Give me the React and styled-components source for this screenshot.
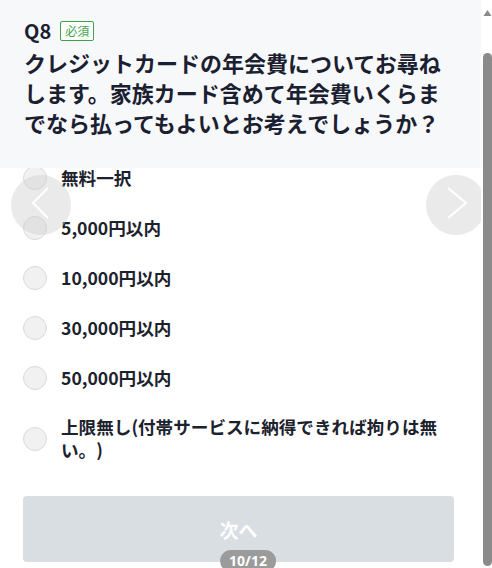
import React from "react";
import styled, { createGlobalStyle } from "styled-components";

const GlobalStyle = createGlobalStyle`
  html, body { margin: 0; padding: 0; background: #ffffff; }
  body { font-family: "Noto Sans CJK JP", "Noto Sans", sans-serif; overflow: hidden; text-spacing-trim: space-all; }
  * { box-sizing: border-box; }
`;

const Frame = styled.div`
  position: relative;
  display: flex;
  width: 492px;
  height: 568px;
  overflow: hidden;
  background: #ffffff;
`;

const Main = styled.main`
  position: relative;
  flex: 1;
  display: flex;
  flex-direction: column;
  overflow: hidden;
`;

const Header = styled.header`
  position: relative;
  z-index: 2;
  background: #f7f8fa;
  padding: 19px 24px 31px 24px;
  color: #1a2030;
`;

const QRow = styled.div`
  display: flex;
  align-items: center;
  gap: 9px;
  height: 24px;
`;

const QNum = styled.span`
  font-size: 20px;
  font-weight: 700;
  line-height: 24px;
`;

const Badge = styled.span`
  display: inline-flex;
  align-items: center;
  justify-content: center;
  height: 20px;
  padding: 0 4px;
  border: 1px solid #3fa34d;
  border-radius: 2px;
  color: #3fa34d;
  font-size: 12px;
  line-height: 1;
  background: #ffffff;
`;

const Title = styled.h1`
  margin: 4px 0 0 0;
  font-size: 22px;
  line-height: 30px;
  font-weight: 700;
`;

const Content = styled.div`
  display: flex;
  flex-direction: column;
  margin-top: -2px;
  padding: 0 27px 0 23px;
`;

const OptionList = styled.ul`
  list-style: none;
  margin: 0;
  padding: 0;
  display: flex;
  flex-direction: column;
  gap: 26px;
`;

const Option = styled.li`
  display: flex;
  align-items: center;
  gap: 14px;
  padding-right: 6px;
`;

const Radio = styled.span`
  flex: none;
  width: 24px;
  height: 24px;
  border-radius: 50%;
  background: #f1f1f1;
  border: 1px solid #dadada;
`;

const Label = styled.span`
  font-size: 17.6px;
  line-height: 23px;
  font-weight: 700;
  color: #1c222d;
  min-height: 24px;
  display: flex;
  align-items: center;
  position: relative;
  top: -1px;
`;

const NextButton = styled.button`
  margin-top: 34px;
  height: 66px;
  width: 100%;
  border: none;
  border-radius: 4px;
  background: #d9dee2;
  color: #ffffff;
  font-family: "Noto Sans CJK JP", "Noto Sans", sans-serif;
  font-size: 19px;
  font-weight: 700;
  padding: 0;
`;

const NavCircle = styled.div`
  position: absolute;
  top: 175px;
  left: ${(p) => p.$left}px;
  width: 60px;
  height: 60px;
  border-radius: 50%;
  background: rgba(205, 205, 205, 0.42);
  z-index: 3;
`;

const Progress = styled.div`
  position: absolute;
  left: 248px;
  bottom: -4px;
  transform: translateX(-50%);
  height: 22px;
  padding: 0 9px;
  border-radius: 11px;
  background: #9b9b9b;
  color: #ffffff;
  font-size: 14px;
  font-weight: 700;
  line-height: 22px;
  z-index: 4;
  font-family: "Noto Sans", "Noto Sans CJK JP", sans-serif;
`;

const ScrollTrack = styled.div`
  flex: none;
  width: 11px;
  display: flex;
  flex-direction: column;
  align-items: flex-end;
  background: #ffffff;
`;

const ArrowUp = styled.svg`
  margin-top: 8px;
  width: 9px;
  height: 9px;
`;

const Thumb = styled.div`
  margin-top: 36px;
  width: 9px;
  height: 513px;
  border-radius: 5px;
  background: #8b8b8b;
`;

const options = [
  "無料一択",
  "5,000円以内",
  "10,000円以内",
  "30,000円以内",
  "50,000円以内",
  "上限無し(付帯サービスに納得できれば拘りは無い。)",
];

export default function App() {
  return (
    <>
      <GlobalStyle />
      <Frame>
        <Main>
          <Header>
            <QRow>
              <QNum>Q8</QNum>
              <Badge>必須</Badge>
            </QRow>
            <Title>
              クレジットカードの年会費についてお尋ねします。家族カード含めて年会費いくらまでなら払ってもよいとお考えでしょうか？
            </Title>
          </Header>
          <Content>
            <OptionList>
              {options.map((o) => (
                <Option key={o}>
                  <Radio />
                  <Label>{o}</Label>
                </Option>
              ))}
            </OptionList>
            <NextButton type="button">次へ</NextButton>
          </Content>
          <NavCircle $left={11}>
            <svg width="60" height="60" viewBox="0 0 60 60">
              <polyline points="37,13 22,28 37,43" fill="none" stroke="#ffffff" strokeWidth="2" />
            </svg>
          </NavCircle>
          <NavCircle $left={426}>
            <svg width="60" height="60" viewBox="0 0 60 60">
              <polyline points="22,13 40,28 22,43" fill="none" stroke="#ffffff" strokeWidth="2" />
            </svg>
          </NavCircle>
        </Main>
        <ScrollTrack>
          <ArrowUp viewBox="0 0 9 9">
            <polygon points="0.5,8 4.5,2 8.5,8" fill="#8b8b8b" />
          </ArrowUp>
          <Thumb />
        </ScrollTrack>
        <Progress>10/12</Progress>
      </Frame>
    </>
  );
}
